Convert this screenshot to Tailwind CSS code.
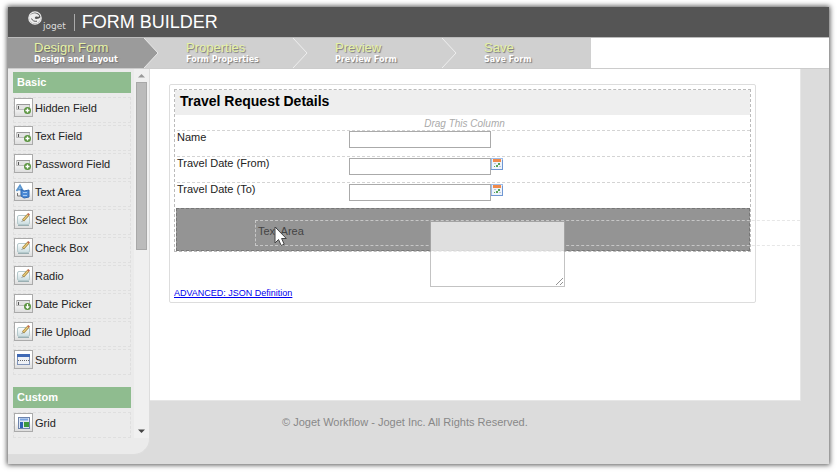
<!DOCTYPE html>
<html lang="en">
<head>
  <meta charset="UTF-8">
  <meta name="viewport" content="width=device-width, initial-scale=1.0">
  <title>Joget Form Builder</title>
  <script src="https://cdn.jsdelivr.net/npm/@tailwindcss/browser@4"></script>
</head>
<body class="bg-white pt-[7px] px-2 pb-2 font-['Liberation_Sans',Arial,sans-serif] text-[11px] leading-[13px] text-[#222]">

  <!-- shared icons -->
  <svg class="absolute w-0 h-0" aria-hidden="true">
    <defs>
      <linearGradient id="pad" x1="0" y1="0" x2="0" y2="1">
        <stop offset="0" stop-color="#fff"/><stop offset="1" stop-color="#c9dcdf"/>
      </linearGradient>
      <linearGradient id="fade" x1="0" y1="0" x2="0" y2="1">
        <stop offset=".4" stop-color="#fff"/><stop offset="1" stop-color="#ddd"/>
      </linearGradient>
    </defs>
    <symbol id="i-field" viewBox="0 0 17 17">
      <rect width="17" height="17" fill="url(#fade)"/>
      <path d="M1.5 5.500h13v5h-13z" fill="#e3e3e3" stroke="#bbb"/>
      <path d="M2 5.500h13" stroke="#999"/>
      <path d="M3.500 7v3" stroke="#555"/>
      <circle cx="12.500" cy="11.500" r="3.500" fill="#5b9440"/>
      <path d="M12.500 9.500v4M10.500 11.500h4" stroke="#fff" stroke-width="1.300"/>
    </symbol>
    <symbol id="i-date" viewBox="0 0 17 17">
      <rect width="17" height="17" fill="url(#fade)"/>
      <path d="M1.500 5.500h13v5h-13z" fill="#e3e3e3" stroke="#bbb"/>
      <path d="M2 5.500h13" stroke="#999"/>
      <path d="M3.500 7v3" stroke="#555"/>
      <circle cx="12.500" cy="11.500" r="3.500" fill="#5b9440"/>
      <path d="M12.500 9v3M10.800 11.300l1.700 1.900 1.700-1.900" fill="none" stroke="#fff" stroke-width="1.200"/>
    </symbol>
    <symbol id="i-area" viewBox="0 0 17 17">
      <rect width="17" height="17" fill="url(#fade)"/>
      <path d="M1.500 8L5 2.500 8 8M3 6.500h4" fill="none" stroke="#5d97cf" stroke-width="1.800"/>
      <path d="M6 6.500l3 1.500 5-1v7l-5 1-3-2z" fill="#4b8ad6" stroke="#2f66ae"/>
      <path d="M8 9.500h4M8 12.500h4" stroke="#a8cbf2"/>
      <path d="M2.500 10v3H6" fill="none" stroke="#777"/>
    </symbol>
    <symbol id="i-edit" viewBox="0 0 17 17">
      <rect width="17" height="17" fill="url(#fade)"/>
      <rect x="2.500" y="4.500" width="12" height="9" rx="1.500" fill="url(#pad)" stroke="#b5c9cc"/>
      <path d="M3 14.500h11" stroke="#9aafb2"/>
      <path d="M8 9.500L13.500 3.500" stroke="#a58742" stroke-width="2.600"/>
      <path d="M8.300 9.200L13.300 3.700" stroke="#efd27f" stroke-width="1.200"/>
      <path d="M13 4l1.200-1.300" stroke="#c06a50" stroke-width="2.200"/>
      <path d="M7 10.500l1-1" stroke="#444"/>
    </symbol>
    <symbol id="i-sub" viewBox="0 0 17 17">
      <rect width="17" height="17" fill="url(#fade)"/>
      <rect x="2.500" y="3.500" width="12" height="10" fill="#eef1f6" stroke="#7f93b8"/>
      <path d="M2 4.500h13" stroke="#3f69b5" stroke-width="3"/>
      <path d="M3 9.500h11" stroke="#666" stroke-dasharray="1 1"/>
    </symbol>
    <symbol id="i-grid" viewBox="0 0 17 17">
      <rect width="17" height="17" fill="url(#fade)"/>
      <rect x="3.500" y="3.500" width="11" height="11" fill="#dfe8f5" stroke="#6d83ab"/>
      <path d="M5 5.500h8" stroke="#7ba5e0" stroke-width="2"/>
      <path d="M6.500 8v6" stroke="#2e62b4" stroke-width="3"/>
      <rect x="9" y="8" width="5" height="5" fill="#3d9a3d"/>
    </symbol>
    <symbol id="i-cal" viewBox="0 0 12 12">
      <rect x=".5" y=".5" width="11" height="11" fill="#eef3fa" stroke="#9dbce8"/>
      <path d="M0 11.500h12M11.500 2v10" stroke="#6f97d3"/>
      <rect x="2" y="1" width="8" height="3" fill="#f08a4b"/>
      <path d="M7 5h2v2H7zM5 7h2v2H5zM3 8h1v1H3z" fill="#58a558"/>
      <path d="M3 5h2v1H3zM8 8h2v1H8z" fill="#b9c6d6"/>
    </symbol>
  </svg>

  <div class="bg-[#dcdcdc] shadow-[0_0_5px_1px_#555] pb-[9px]">

    <header class="h-[31px] bg-[#555] border-b border-[#bbb] flex items-center pl-5 text-white">
      <svg class="w-[14px] h-[14px] mb-2" viewBox="0 0 14 14">
        <circle cx="7" cy="7" r="6.200" fill="none" stroke="#eee" stroke-width="1.200"/>
        <path d="M1 6c2-4 6-4.500 9-2.500 1 .7 1.500 1.500 1 2-1 .8-2-.7-3.500.2-1.300.9-.5 2.300.8 2.300 2 0 3-1 4.700-2-.1 3.500-2.500 6.500-6 6.500-3.500-.1-6-3-6-6.500z" fill="#eee"/>
        <path d="M3.500 7.500c.8 2.300 3 3.200 5.500 2.700" fill="none" stroke="#555"/>
      </svg>
      <span class="mt-2 ml-px font-['DejaVu_Sans',sans-serif] text-[9px] leading-[10px] text-[#ddd]">joget</span>
      <span class="w-px h-[17px] bg-[#aaa] ml-2 mr-[7px]"></span>
      <h1 class="text-[18px] leading-5">FORM BUILDER</h1>
    </header>

    <nav class="flex bg-white border-b border-[#ccc] h-[31px]">
      <a href="#design" class="w-[136px] pl-[26px] pt-[3px] bg-[#9b9b9b] whitespace-nowrap">
        <span class="block text-[13px] leading-[14px] text-[#e6f2a4] [text-shadow:1px_1px_1px_#666]">Design Form</span>
        <span class="block font-['DejaVu_Sans',sans-serif] font-bold text-[8px] leading-[10px] text-white [text-shadow:1px_1px_1px_#777]">Design and Layout</span>
      </a>
      <svg class="w-[15px] h-[30px] shrink-0" viewBox="0 0 15 30"><path d="M0 0h15v30H0z" fill="#d0d0d0"/><path d="M0 0l14 15L0 30z" fill="#9b9b9b"/><path d="M0 0l14 15L0 30" fill="none" stroke="#e8e8e8"/></svg>
      <a href="#properties" class="w-[134px] pl-[27px] pt-[3px] bg-[#d0d0d0] whitespace-nowrap">
        <span class="block text-[13px] leading-[14px] text-[#e6f2a4] [text-shadow:1px_1px_1px_#777]">Properties</span>
        <span class="block font-['DejaVu_Sans',sans-serif] font-bold text-[8px] leading-[10px] text-white [text-shadow:1px_1px_1px_#777]">Form Properties</span>
      </a>
      <svg class="w-[15px] h-[30px] shrink-0" viewBox="0 0 15 30"><path d="M0 0h15v30H0z" fill="#d0d0d0"/><path d="M0 0l14 15L0 30" fill="none" stroke="#eee"/></svg>
      <a href="#preview" class="w-[134px] pl-[27px] pt-[3px] bg-[#d0d0d0] whitespace-nowrap">
        <span class="block text-[13px] leading-[14px] text-[#e6f2a4] [text-shadow:1px_1px_1px_#777]">Preview</span>
        <span class="block font-['DejaVu_Sans',sans-serif] font-bold text-[8px] leading-[10px] text-white [text-shadow:1px_1px_1px_#777]">Preview Form</span>
      </a>
      <svg class="w-[15px] h-[30px] shrink-0" viewBox="0 0 15 30"><path d="M0 0h15v30H0z" fill="#d0d0d0"/><path d="M0 0l14 15L0 30" fill="none" stroke="#eee"/></svg>
      <a href="#save" class="w-[134px] pl-[27px] pt-[3px] bg-[#d0d0d0] whitespace-nowrap">
        <span class="block text-[13px] leading-[14px] text-[#e6f2a4] [text-shadow:1px_1px_1px_#777]">Save</span>
        <span class="block font-['DejaVu_Sans',sans-serif] font-bold text-[8px] leading-[10px] text-white [text-shadow:1px_1px_1px_#777]">Save Form</span>
      </a>
    </nav>

    <div class="flex items-start">

      <!-- palette -->
      <aside class="w-[142px] shrink-0 bg-[#ebebeb] border-r border-b border-[#ddd] rounded-br-[16px] pb-4 flex">
        <div class="flex-1 pt-[3px] pl-[5px] pr-[3px]">
          <h2 class="bg-[#8fbc8f] text-white font-bold h-[21px] leading-[21px] pl-1 mb-1">Basic</h2>
          <ul class="flex flex-col gap-[2px]">
            <li class="h-[26px] border border-dashed border-[#dfdfdf] flex items-start gap-[2px]"><svg class="w-[19px] h-[19px] border border-[#aaa]"><use href="#i-field"/></svg><span class="pt-1">Hidden Field</span></li>
            <li class="h-[26px] border border-dashed border-[#dfdfdf] flex items-start gap-[2px]"><svg class="w-[19px] h-[19px] border border-[#aaa]"><use href="#i-field"/></svg><span class="pt-1">Text Field</span></li>
            <li class="h-[26px] border border-dashed border-[#dfdfdf] flex items-start gap-[2px]"><svg class="w-[19px] h-[19px] border border-[#aaa]"><use href="#i-field"/></svg><span class="pt-1">Password Field</span></li>
            <li class="h-[26px] border border-dashed border-[#dfdfdf] flex items-start gap-[2px]"><svg class="w-[19px] h-[19px] border border-[#aaa]"><use href="#i-area"/></svg><span class="pt-1">Text Area</span></li>
            <li class="h-[26px] border border-dashed border-[#dfdfdf] flex items-start gap-[2px]"><svg class="w-[19px] h-[19px] border border-[#aaa]"><use href="#i-edit"/></svg><span class="pt-1">Select Box</span></li>
            <li class="h-[26px] border border-dashed border-[#dfdfdf] flex items-start gap-[2px]"><svg class="w-[19px] h-[19px] border border-[#aaa]"><use href="#i-edit"/></svg><span class="pt-1">Check Box</span></li>
            <li class="h-[26px] border border-dashed border-[#dfdfdf] flex items-start gap-[2px]"><svg class="w-[19px] h-[19px] border border-[#aaa]"><use href="#i-edit"/></svg><span class="pt-1">Radio</span></li>
            <li class="h-[26px] border border-dashed border-[#dfdfdf] flex items-start gap-[2px]"><svg class="w-[19px] h-[19px] border border-[#aaa]"><use href="#i-date"/></svg><span class="pt-1">Date Picker</span></li>
            <li class="h-[26px] border border-dashed border-[#dfdfdf] flex items-start gap-[2px]"><svg class="w-[19px] h-[19px] border border-[#aaa]"><use href="#i-edit"/></svg><span class="pt-1">File Upload</span></li>
            <li class="h-[26px] border border-dashed border-[#dfdfdf] flex items-start gap-[2px]"><svg class="w-[19px] h-[19px] border border-[#aaa]"><use href="#i-sub"/></svg><span class="pt-1">Subform</span></li>
          </ul>
          <h2 class="bg-[#8fbc8f] text-white font-bold h-[21px] leading-[21px] pl-1 mt-3 mb-1">Custom</h2>
          <ul>
            <li class="h-[26px] border border-dashed border-[#dfdfdf] flex items-start gap-[2px]"><svg class="w-[19px] h-[19px] border border-[#aaa]"><use href="#i-grid"/></svg><span class="pt-1">Grid</span></li>
          </ul>
        </div>
        <!-- scrollbar -->
        <div class="w-[15px] bg-[#f0f0f0] flex flex-col items-center">
          <svg class="w-[7px] h-[13px] shrink-0" viewBox="0 0 7 13"><path d="M0 8.500L3.500 5 7 8.500z" fill="#999"/></svg>
          <div class="w-[11px] h-[168px] bg-[#bbb] border border-[#a8a8a8]"></div>
          <svg class="w-[7px] h-[13px] shrink-0 mt-auto" viewBox="0 0 7 13"><path d="M0 4.500L3.500 8 7 4.500z" fill="#444"/></svg>
        </div>
      </aside>

      <main class="flex-1 pr-7">
        <div class="relative bg-white pt-[15px] pl-[19px] pr-11 pb-[97px] border-b border-r border-[#e6e6e6]">
          <form class="border border-[#ddd] rounded-[2px] p-1 pb-[3px]">
            <section class="border border-dashed border-[#bbb]">
              <h2 class="bg-[#eee] text-black font-bold text-[14px] leading-[23px] h-[25px] pl-[5px]">Travel Request Details</h2>
              <p class="text-center italic text-[#aaa] text-[10px] leading-[15px] pt-px -mb-px pl-1">Drag This Column</p>
              <div class="h-[26px] ml-[2px] border-t border-dashed border-[#d4d4d4] flex items-start">
                <label for="name" class="w-[30%]">Name</label>
                <input id="name" type="text" class="w-[142px] h-[17px] border border-[#aaa] bg-white px-1">
              </div>
              <div class="h-[26px] ml-[2px] border-t border-dashed border-[#d4d4d4] flex items-start">
                <label for="from" class="w-[30%]">Travel Date (From)</label>
                <input id="from" type="text" class="w-[142px] h-[17px] mt-px border border-[#aaa] bg-white px-1">
                <button type="button" aria-label="Pick start date" class="mt-px"><svg class="w-3 h-3"><use href="#i-cal"/></svg></button>
              </div>
              <div class="h-[26px] ml-[2px] border-t border-dashed border-[#d4d4d4] flex items-start">
                <label for="to" class="w-[30%]">Travel Date (To)</label>
                <input id="to" type="text" class="w-[142px] h-[17px] mt-px border border-[#aaa] bg-white px-1">
                <button type="button" aria-label="Pick end date" class="mt-px"><svg class="w-3 h-3"><use href="#i-cal"/></svg></button>
              </div>
              <!-- drop target -->
              <div class="h-[43px] ml-px bg-[#949494] border border-dashed border-[#777]"></div>
            </section>
            <a href="#json" class="block w-fit mt-[35px] text-[9px] leading-3 text-[#00e] underline">ADVANCED: JSON Definition</a>
          </form>

          <!-- element being dragged -->
          <div class="absolute top-[151px] left-[105px] right-0 h-[26px] border-y border-l border-dashed border-[#ddd] opacity-70 flex items-start">
            <label for="area" class="w-[32%] pl-[2px] pt-1">Text Area</label>
            <textarea id="area" class="w-[135px] h-[66px] shrink-0 border border-[#aaa] bg-white resize"></textarea>
          </div>
          <svg class="absolute top-[157px] left-[124px] w-[13px] h-[21px]" viewBox="0 0 13 21">
            <path d="M1 1v16l3.500-3.500 2.700 6 3-1.300-2.600-5.700H12.300z" fill="#fff" stroke="#444"/>
          </svg>
        </div>
        <footer class="pl-[132px] pt-[15px] text-[#888]">© Joget Workflow - Joget Inc. All Rights Reserved.</footer>
      </main>
    </div>
  </div>
</body>
</html>
